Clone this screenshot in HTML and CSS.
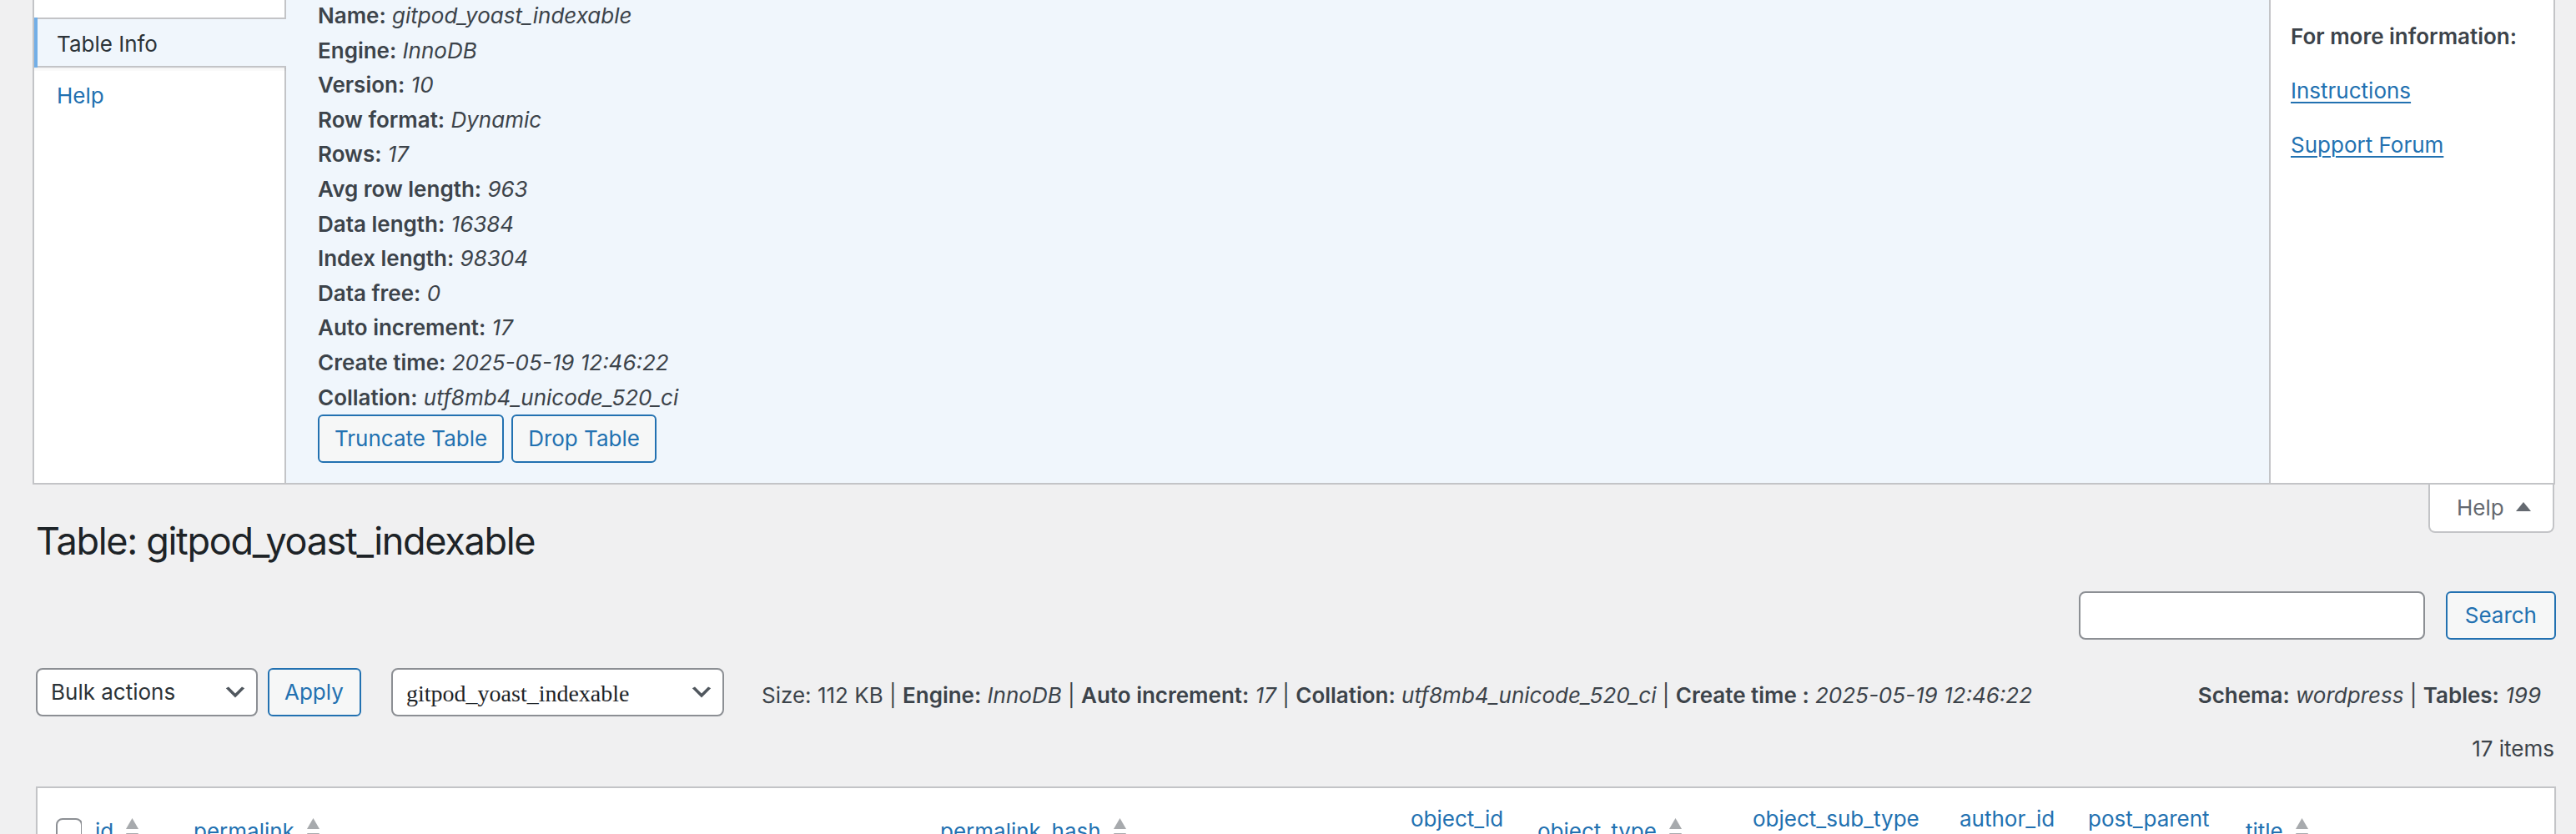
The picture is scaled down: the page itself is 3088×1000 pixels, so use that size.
FILE: index.html
```html
<!DOCTYPE html>
<html lang="en">
<head>
<meta charset="utf-8">
<title>Table: gitpod_yoast_indexable</title>
<link rel="stylesheet" href="styles.css">
</head>
<body class="page">
  <div class="screen-meta">
    <div class="help-tabs">
      <ul class="tab-list">
        <li class="tab tab-active"><a class="tab-link" href="#">Table Info</a></li>
        <li class="tab"><a class="tab-link" href="#">Help</a></li>
      </ul>
    </div>
    <div class="help-content">
      <div class="info-list">
        <div class="info-row"><b class="lbl">Name:</b> <i class="val">gitpod_yoast_indexable</i></div>
        <div class="info-row"><b class="lbl">Engine:</b> <i class="val">InnoDB</i></div>
        <div class="info-row"><b class="lbl">Version:</b> <i class="val">10</i></div>
        <div class="info-row"><b class="lbl">Row format:</b> <i class="val">Dynamic</i></div>
        <div class="info-row"><b class="lbl">Rows:</b> <i class="val">17</i></div>
        <div class="info-row"><b class="lbl">Avg row length:</b> <i class="val">963</i></div>
        <div class="info-row"><b class="lbl">Data length:</b> <i class="val">16384</i></div>
        <div class="info-row"><b class="lbl">Index length:</b> <i class="val">98304</i></div>
        <div class="info-row"><b class="lbl">Data free:</b> <i class="val">0</i></div>
        <div class="info-row"><b class="lbl">Auto increment:</b> <i class="val">17</i></div>
        <div class="info-row"><b class="lbl">Create time:</b> <i class="val">2025-05-19 12:46:22</i></div>
        <div class="info-row"><b class="lbl">Collation:</b> <i class="val">utf8mb4_unicode_520_ci</i></div>
      </div>
      <div class="actions">
        <button class="button" type="button">Truncate Table</button>
        <button class="button" type="button">Drop Table</button>
      </div>
    </div>
    <div class="help-sidebar">
      <p class="side-p"><strong class="side-strong">For more information:</strong></p>
      <p class="side-p"><a class="side-link" href="#">Instructions</a></p>
      <p class="side-p"><a class="side-link" href="#">Support Forum</a></p>
    </div>
  </div>

  <div class="meta-links">
    <a class="show-settings" href="#"><span class="show-text">Help</span><svg class="show-arrow" width="18" height="11" viewBox="0 0 18 11"><polygon points="9,0 18,11 0,11" fill="#646970"/></svg></a>
  </div>

  <div class="wrap">
    <h1 class="page-title">Table: gitpod_yoast_indexable</h1>

    <div class="search-box">
      <input class="search-input" type="search" value="">
      <button class="button search-btn" type="button">Search</button>
    </div>

    <div class="tablenav">
      <div class="select bulk-select"><span class="select-text">Bulk actions</span><svg class="chev" width="32" height="32" viewBox="0 0 20 20"><path d="M5 6l5 5 5-5 2 1-7 7-7-7 2-1z" fill="#50575e"/></svg></div>
      <button class="button apply-btn" type="button">Apply</button>
      <div class="select table-select"><span class="select-text serif">gitpod_yoast_indexable</span><svg class="chev" width="32" height="32" viewBox="0 0 20 20"><path d="M5 6l5 5 5-5 2 1-7 7-7-7 2-1z" fill="#50575e"/></svg></div>
      <div class="table-meta">Size: 112 KB | <b class="lbl">Engine:</b> <i class="val">InnoDB</i> | <b class="lbl">Auto increment:</b> <i class="val">17</i> | <b class="lbl">Collation:</b> <i class="val">utf8mb4_unicode_520_ci</i> | <b class="lbl">Create time :</b> <i class="val">2025-05-19 12:46:22</i></div>
      <div class="schema-meta"><b class="lbl">Schema:</b> <i class="val">wordpress</i> | <b class="lbl">Tables:</b> <i class="val">199</i></div>
    </div>

    <div class="items-row"><span class="displaying-num">17 items</span></div>

    <table class="widefat">
      <thead>
        <tr class="head-row">
          <th class="cell check-col" style="width:53px"><input class="cb" type="checkbox"></th>
          <th class="cell" style="width:118px"><a class="sort" href="#"><span class="sort-label">id</span><span class="ind"><svg class="tri" width="15" height="13" viewBox="0 0 15 13"><polygon points="7.5,0 15,13 0,13" fill="#a7aaad"/></svg><svg class="tri" width="15" height="13" viewBox="0 0 15 13"><polygon points="0,0 15,0 7.5,13" fill="#a7aaad"/></svg></span></a></th>
          <th class="cell" style="width:895px"><a class="sort" href="#"><span class="sort-label">permalink</span><span class="ind"><svg class="tri" width="15" height="13" viewBox="0 0 15 13"><polygon points="7.5,0 15,13 0,13" fill="#a7aaad"/></svg><svg class="tri" width="15" height="13" viewBox="0 0 15 13"><polygon points="0,0 15,0 7.5,13" fill="#a7aaad"/></svg></span></a></th>
          <th class="cell" style="width:564px"><a class="sort" href="#"><span class="sort-label">permalink_hash</span><span class="ind"><svg class="tri" width="15" height="13" viewBox="0 0 15 13"><polygon points="7.5,0 15,13 0,13" fill="#a7aaad"/></svg><svg class="tri" width="15" height="13" viewBox="0 0 15 13"><polygon points="0,0 15,0 7.5,13" fill="#a7aaad"/></svg></span></a></th>
          <th class="cell" style="width:152px"><a class="sort sort-wrap" href="#"><span class="sort-label">object_id</span><span class="ind"><svg class="tri" width="15" height="13" viewBox="0 0 15 13"><polygon points="7.5,0 15,13 0,13" fill="#a7aaad"/></svg><svg class="tri" width="15" height="13" viewBox="0 0 15 13"><polygon points="0,0 15,0 7.5,13" fill="#a7aaad"/></svg></span></a></th>
          <th class="cell" style="width:258px"><a class="sort" href="#"><span class="sort-label">object_type</span><span class="ind"><svg class="tri" width="15" height="13" viewBox="0 0 15 13"><polygon points="7.5,0 15,13 0,13" fill="#a7aaad"/></svg><svg class="tri" width="15" height="13" viewBox="0 0 15 13"><polygon points="0,0 15,0 7.5,13" fill="#a7aaad"/></svg></span></a></th>
          <th class="cell" style="width:248px"><a class="sort sort-wrap" href="#"><span class="sort-label">object_sub_type</span><span class="ind"><svg class="tri" width="15" height="13" viewBox="0 0 15 13"><polygon points="7.5,0 15,13 0,13" fill="#a7aaad"/></svg><svg class="tri" width="15" height="13" viewBox="0 0 15 13"><polygon points="0,0 15,0 7.5,13" fill="#a7aaad"/></svg></span></a></th>
          <th class="cell" style="width:154px"><a class="sort sort-wrap" href="#"><span class="sort-label">author_id</span><span class="ind"><svg class="tri" width="15" height="13" viewBox="0 0 15 13"><polygon points="7.5,0 15,13 0,13" fill="#a7aaad"/></svg><svg class="tri" width="15" height="13" viewBox="0 0 15 13"><polygon points="0,0 15,0 7.5,13" fill="#a7aaad"/></svg></span></a></th>
          <th class="cell" style="width:189px"><a class="sort sort-wrap" href="#"><span class="sort-label">post_parent</span><span class="ind"><svg class="tri" width="15" height="13" viewBox="0 0 15 13"><polygon points="7.5,0 15,13 0,13" fill="#a7aaad"/></svg><svg class="tri" width="15" height="13" viewBox="0 0 15 13"><polygon points="0,0 15,0 7.5,13" fill="#a7aaad"/></svg></span></a></th>
          <th class="cell" style="width:386px"><a class="sort" href="#"><span class="sort-label">title</span><span class="ind"><svg class="tri" width="15" height="13" viewBox="0 0 15 13"><polygon points="7.5,0 15,13 0,13" fill="#a7aaad"/></svg><svg class="tri" width="15" height="13" viewBox="0 0 15 13"><polygon points="0,0 15,0 7.5,13" fill="#a7aaad"/></svg></span></a></th>
        </tr>
      </thead>
    </table>
  </div>
</body>
</html>
```

FILE: styles.css
```css
* { box-sizing: border-box; }

.page {
  margin: 0;
  padding: 0 25px 0 39px;
  background: #f0f0f1;
  color: #3c434a;
  font-family: Inter, "Liberation Sans", sans-serif;
  font-size: 26px;
  line-height: 1.4;
}

/* ---------- contextual help panel ---------- */
.screen-meta {
  display: flex;
  background: #fff;
  border: 2px solid #c3c4c7;
  border-top: none;
}

.help-tabs {
  flex: 0 0 300px;
  padding-top: 21px;
}

.tab-list {
  list-style: none;
  margin: 0;
  padding: 0;
}

.tab {
  border-left: 4px solid transparent;
}

.tab-link {
  display: block;
  padding: 12px 10px 8px 23px;
  line-height: 36.4px;
  color: #2271b1;
  text-decoration: none;
  border-top: 2px solid transparent;
  border-bottom: 2px solid transparent;
}

.tab + .tab .tab-link {
  padding-top: 14px;
  padding-bottom: 6px;
}

.tab-active {
  position: relative;
  z-index: 1;
  margin-right: -2px;
  border-left-color: #72aee6;
  background: #f0f6fc;
  box-shadow: 0 4px 0 rgba(0, 0, 0, 0.02), 0 2px 0 rgba(0, 0, 0, 0.02);
}

.tab-active .tab-link {
  border-color: #c3c4c7;
  color: #2c3338;
}

.help-content {
  flex: 1 1 auto;
  min-width: 0;
  background: #f0f6fc;
  border-left: 2px solid #c3c4c7;
  padding: 0 44px 24px 38px;
}

.info-list {
  margin-top: -2px;
  line-height: 41.6px;
}

.lbl { font-weight: 600; }
.val { font-style: italic; }

.actions {
  display: flex;
  gap: 9px;
}

.button {
  display: inline-flex;
  align-items: center;
  height: 58px;
  margin: 0;
  padding: 0 18px;
  border: 2px solid #2271b1;
  border-radius: 6px;
  background: #f6f7f7;
  color: #2271b1;
  font-family: Inter, "Liberation Sans", sans-serif;
  font-size: 26px;
  line-height: 1;
  white-space: nowrap;
}

.help-sidebar {
  flex: 0 0 341px;
  border-left: 2px solid #c3c4c7;
  padding: 0 16px 0 24px;
}

.side-p {
  margin: 24px 0 26px;
  line-height: 39px;
}

.side-strong { font-weight: 600; }

.side-link {
  color: #2271b1;
  text-decoration: underline;
  text-decoration-thickness: 2px;
  text-underline-offset: 4px;
}

/* ---------- help toggle tab ---------- */
.meta-links {
  float: right;
  margin-right: 1px;
}

.show-settings {
  display: flex;
  align-items: center;
  gap: 14px;
  width: 151px;
  height: 58px;
  padding: 0 0 0 32px;
  background: #fff;
  border: 2px solid #c3c4c7;
  border-top: none;
  border-radius: 0 0 8px 8px;
  color: #646970;
  text-decoration: none;
  line-height: 44.2px;
}

.show-arrow { margin-bottom: 3px; }

/* ---------- main wrap ---------- */
.wrap {
  margin: 20px -1px 0 4px;
}

.page-title {
  margin: 0;
  padding: 18px 0 8px;
  font-size: 45px;
  font-weight: 400;
  letter-spacing: -1.3px;
  line-height: 59.8px;
  color: #1d2327;
}

.search-box {
  display: flex;
  justify-content: flex-end;
  gap: 25px;
  margin-top: 22px;
}

.search-input {
  width: 415px;
  height: 58px;
  margin: 0;
  border: 2px solid #8c8f94;
  border-radius: 8px;
  background: #fff;
}

.search-btn { padding: 0 21px; }

.tablenav {
  display: flex;
  align-items: center;
  height: 58px;
  margin-top: 34px;
  white-space: nowrap;
}

.select {
  display: flex;
  align-items: center;
  justify-content: space-between;
  height: 58px;
  border: 2px solid #8c8f94;
  border-radius: 8px;
  background: #fff;
  color: #2c3338;
  padding: 0 9px 0 16px;
}

.select-text { line-height: 41.6px; }

.serif {
  font-family: "Liberation Serif", serif;
  font-size: 28px;
  color: #1d2327;
  padding-top: 4px;
}

.bulk-select { width: 266px; }

.apply-btn {
  margin-left: 12px;
  width: 112px;
  padding: 0 18px;
}

.table-select {
  width: 399px;
  margin-left: 36px;
}

.table-meta {
  margin-left: 45px;
  padding-top: 7px;
  line-height: 41.6px;
}

.schema-meta {
  margin-left: auto;
  margin-right: 18px;
  padding-top: 7px;
  line-height: 41.6px;
}

.items-row {
  display: flex;
  justify-content: flex-end;
  margin-top: 19px;
  line-height: 39px;
  padding-right: 2px;
}

/* ---------- list table ---------- */
.widefat {
  width: 100%;
  margin-top: 26px;
  table-layout: fixed;
  border-collapse: separate;
  border-spacing: 0;
  border: 2px solid #c3c4c7;
  background: #fff;
  box-shadow: 0 2px 2px rgba(0, 0, 0, 0.04);
}

.head-row { height: 104px; }

.cell {
  padding: 0 0 0 16px;
  text-align: left;
  vertical-align: middle;
  font-weight: 400;
  overflow: hidden;
}

.check-col { padding-left: 22px; }

.cb {
  appearance: none;
  -webkit-appearance: none;
  display: block;
  width: 32px;
  height: 32px;
  margin: 0;
  border: 2px solid #8c8f94;
  border-radius: 8px;
  background: #fff;
}

.sort {
  display: flex;
  align-items: center;
  color: #2271b1;
  text-decoration: none;
  line-height: 41.6px;
}

.sort-wrap {
  flex-direction: column;
  align-items: flex-start;
}

.ind {
  display: flex;
  flex-direction: column;
  gap: 5px;
  margin-left: 15px;
}

.sort-wrap .ind { margin-left: 0; }

.tri { display: block; }
```
